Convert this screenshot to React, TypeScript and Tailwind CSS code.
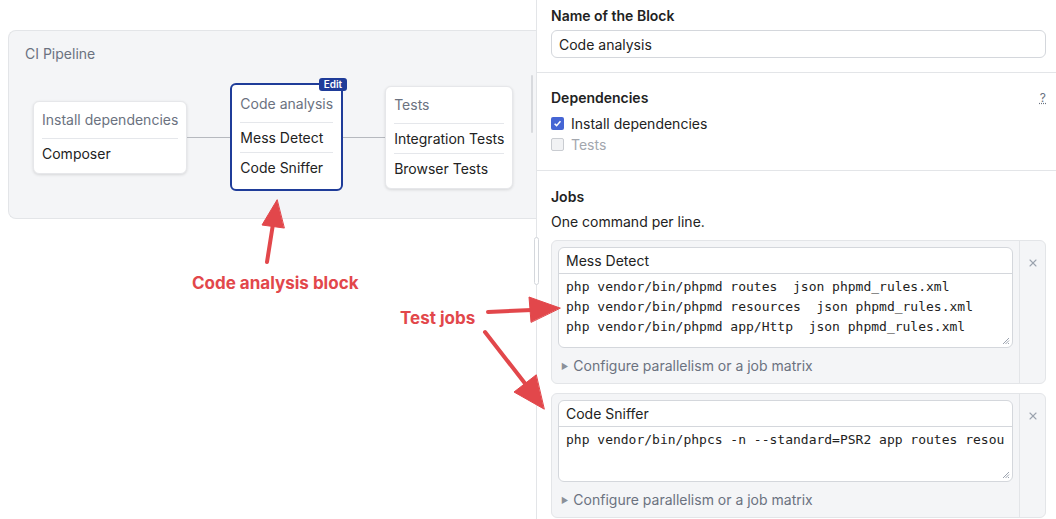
import { X } from 'lucide-react';

interface NodeProps {
  title: string;
  jobs: string[];
  active?: boolean;
}

function PipelineNode({ title, jobs, active = false }: NodeProps) {
  if (active) {
    return (
      <div className="relative rounded-md border-2 border-[#1f3c99] bg-white px-2 pb-[7px]">
        <span className="absolute -right-[6px] -top-[7px] rounded-[3px] bg-[#1f3c99] px-[5px] text-[10px] font-semibold leading-[13px] text-white">
          Edit
        </span>
        <div className="pb-[9px] pt-[10px] leading-[18px] text-[#6b7280]">{title}</div>
        {jobs.map((job) => (
          <div key={job} className="flex h-[30px] items-center border-t border-[#e5e7eb] text-[#222]">
            {job}
          </div>
        ))}
      </div>
    );
  }
  return (
    <div className="rounded-md border border-[#e6e7ea] bg-white px-2 pb-[5px] shadow-[0_1px_3px_rgba(0,0,0,0.12)]">
      <div className="pb-[9px] pt-[9px] leading-[18px] text-[#6b7280]">{title}</div>
      {jobs.map((job) => (
        <div key={job} className="flex h-[30px] items-center border-t border-[#e5e7eb] text-[#222]">
          {job}
        </div>
      ))}
    </div>
  );
}

function ResizeGrip() {
  return (
    <svg className="absolute bottom-[2px] right-[2px]" width="9" height="9" viewBox="0 0 9 9">
      <path d="M8 2 L2 8 M8 4.5 L4.5 8 M8 7 L7 8" stroke="#9ca3af" strokeWidth="1" />
    </svg>
  );
}

interface JobProps {
  name: string;
  lines: string[];
  tall?: boolean;
}

function JobCard({ name, lines, tall = false }: JobProps) {
  return (
    <div className="flex rounded-md border border-[#e3e5e8] bg-[#f4f5f7]">
      <div className="min-w-0 flex-1 px-[6px] pt-[6px] pb-[8px]">
        <div className="relative overflow-hidden rounded-md border border-[#d4d7dc] bg-white">
          <div className="flex h-[26px] items-center border-b border-[#d4d7dc] px-[7px] text-[#222]">{name}</div>
          <div
            className={`overflow-hidden px-[7px] pt-[3px] font-['DejaVu_Sans_Mono',monospace] text-[13px] leading-[20px] text-[#222] ${tall ? 'h-[73px]' : 'h-[54px]'}`}
          >
            {lines.map((l) => (
              <div key={l} className="overflow-hidden whitespace-pre">
                {l}
              </div>
            ))}
          </div>
          <ResizeGrip />
        </div>
        <div className="mt-[9px] flex items-center gap-[5px] pl-[3px] leading-[18px] text-[#6b7280]">
          <span className="text-[8px] text-[#8b9099]">▶</span>
          Configure parallelism or a job matrix
        </div>
      </div>
      <div className="flex w-[26px] shrink-0 justify-center border-l border-[#e3e5e8] pt-[16px] text-[#9ca3af]">
        <X className="h-3 w-3" strokeWidth={2.2} />
      </div>
    </div>
  );
}

export default function App() {
  return (
    <div className="relative flex h-[519px] w-[1056px] overflow-hidden bg-white font-['Inter',sans-serif] text-[14px]">
      {/* Left: pipeline canvas */}
      <div className="w-[536px] shrink-0 pl-2 pt-[30px]">
        <div className="relative h-[189px] rounded-l-lg border border-r-0 border-[#e3e5e8] bg-[#f4f5f7]">
          <div className="pl-4 pt-[13px] leading-5 text-[#6b7280]">CI Pipeline</div>
          <div className="mt-[19px] flex items-center pl-[24px]">
            <PipelineNode title="Install dependencies" jobs={['Composer']} />
            <div className="h-px w-[43px] bg-[#b6b9bf]" />
            <PipelineNode title="Code analysis" jobs={['Mess Detect', 'Code Sniffer']} active />
            <div className="h-px w-[42px] bg-[#b6b9bf]" />
            <PipelineNode title="Tests" jobs={['Integration Tests', 'Browser Tests']} />
          </div>
          <div className="absolute right-[3px] top-[44px] h-[58px] w-[2px] rounded bg-[#d8dade]" />
        </div>
      </div>

      {/* Right: block editor */}
      <div className="relative min-w-0 flex-1 border-l border-[#e3e5e8]">
        <div className="absolute -left-[3px] top-[237px] h-[48px] w-[5px] rounded-full border border-[#d4d7dc] bg-white" />

        <section className="border-b border-[#e3e5e8] pb-[14px] pl-[14px] pr-[10px] pt-[6px]">
          <div className="font-semibold leading-5 text-[#222]">Name of the Block</div>
          <div className="mt-[4px] flex h-[28px] items-center rounded-md border border-[#d4d7dc] px-[7px] text-[#222]">
            Code analysis
          </div>
        </section>

        <section className="border-b border-[#e3e5e8] pb-[15px] pl-[14px] pr-[10px] pt-[15px]">
          <div className="flex items-center justify-between leading-5">
            <span className="font-semibold text-[#222]">Dependencies</span>
            <span className="text-[12px] text-[#6b7280] underline decoration-dotted">?</span>
          </div>
          <div className="mt-[5px] flex h-[21px] items-center gap-[7px] text-[#222]">
            <span className="flex h-[13px] w-[13px] items-center justify-center rounded-[2px] bg-[#4565d4]">
              <svg width="9" height="9" viewBox="0 0 10 10">
                <path d="M1.8 5.2 L4 7.4 L8.3 2.6" fill="none" stroke="white" strokeWidth="1.7" />
              </svg>
            </span>
            Install dependencies
          </div>
          <div className="flex h-[21px] items-center gap-[7px] text-[#a3a7ae]">
            <span className="h-[13px] w-[13px] rounded-[2px] border border-[#c9ccd1] bg-[#f1f2f4]" />
            Tests
          </div>
        </section>

        <section className="pl-[14px] pr-[10px] pt-[16px]">
          <div className="font-semibold leading-5 text-[#222]">Jobs</div>
          <div className="mt-[5px] leading-5 text-[#222]">One command per line.</div>
          <div className="mt-[8px] flex flex-col gap-[9px]">
            <JobCard
              name="Mess Detect"
              tall
              lines={[
                'php vendor/bin/phpmd routes  json phpmd_rules.xml',
                'php vendor/bin/phpmd resources  json phpmd_rules.xml',
                'php vendor/bin/phpmd app/Http  json phpmd_rules.xml',
              ]}
            />
            <JobCard
              name="Code Sniffer"
              lines={['php vendor/bin/phpcs -n --standard=PSR2 app routes resources']}
            />
          </div>
        </section>
      </div>

      {/* Annotations */}
      <div className="pointer-events-none absolute inset-0 z-10">
        <svg className="absolute left-0 top-0" width="1056" height="519">
          <g fill="#e2474b" stroke="#e2474b" strokeLinecap="round">
            <line x1="267" y1="262" x2="273" y2="224" strokeWidth="4" />
            <polygon points="277,200 262,225 284,228" strokeWidth="1" strokeLinejoin="round" />
            <line x1="488" y1="312" x2="532" y2="310" strokeWidth="4" />
            <polygon points="560,308 529,297 531,322" strokeWidth="1" strokeLinejoin="round" />
            <line x1="485" y1="332" x2="527" y2="386" strokeWidth="4" />
            <polygon points="544,409 514,392 536,375" strokeWidth="1" strokeLinejoin="round" />
          </g>
        </svg>
        <div className="absolute left-[192px] top-[272px] text-[17px] font-bold leading-[22px] text-[#e2474b]">
          Code analysis block
        </div>
        <div className="absolute left-[400px] top-[307px] text-[17px] font-bold leading-[22px] text-[#e2474b]">
          Test jobs
        </div>
      </div>
    </div>
  );
}
